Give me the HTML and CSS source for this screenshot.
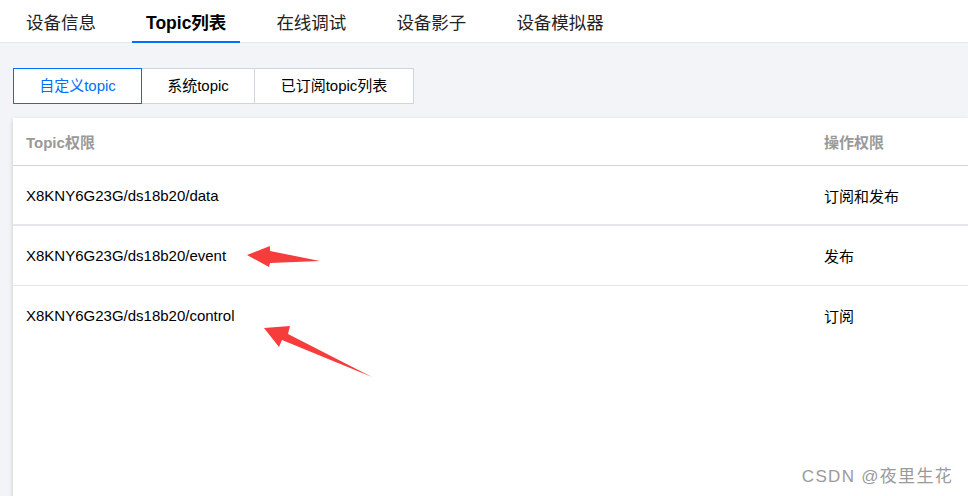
FILE: index.html
```html
<!DOCTYPE html>
<html lang="zh-CN">
<head>
    <meta charset="UTF-8">
    <meta name="viewport" content="width=device-width, initial-scale=1.0">
    <title>Topic列表</title>
    <link rel="stylesheet" href="styles.css">
</head>
<body>
    <div class="top-tabs">
        <div class="top-tab">设备信息</div>
        <div class="top-tab active">Topic列表</div>
        <div class="top-tab">在线调试</div>
        <div class="top-tab">设备影子</div>
        <div class="top-tab">设备模拟器</div>
    </div>

    <div class="main">
        <div class="sub-tabs">
            <div class="sub-tab active">自定义topic</div>
            <div class="sub-tab">系统topic</div>
            <div class="sub-tab wide">已订阅topic列表</div>
        </div>

        <div class="card">
            <div class="row head">
                <div class="col-topic">Topic权限</div>
                <div class="col-perm">操作权限</div>
            </div>
            <div class="row first">
                <div class="col-topic">X8KNY6G23G/ds18b20/data</div>
                <div class="col-perm">订阅和发布</div>
            </div>
            <div class="row">
                <div class="col-topic">X8KNY6G23G/ds18b20/event</div>
                <div class="col-perm">发布</div>
            </div>
            <div class="row last">
                <div class="col-topic">X8KNY6G23G/ds18b20/control</div>
                <div class="col-perm">订阅</div>
            </div>
        </div>
    </div>

    <!-- annotation arrows drawn over the screenshot -->
    <svg class="arrows" width="968" height="496" viewBox="0 0 968 496">
        <polygon points="247,255 270,246 270,251 320,261 270,263 269,267" fill="#f73c3c"/>
        <polygon points="264,328 290,326 288,334 372,377 282,340 279,347" fill="#f73c3c"/>
    </svg>

    <div class="watermark">CSDN @夜里生花</div>
</body>
</html>
```

FILE: styles.css
```css
body {
    margin: 0;
    width: 968px;
    height: 496px;
    overflow: hidden;
    background-color: #f3f4f7;
    font-family: "Liberation Sans", Arial, "Noto Sans CJK SC", sans-serif;
    color: #000;
    position: relative;
}
.top-tabs {
    display: flex;
    height: 42px;
    padding-left: 12px;
    background: white;
    border-bottom: 1px solid #e5e7ec;
}
.top-tab {
    padding: 2px 14px 0;
    margin-right: 22px;
    font-size: 17.5px;
    line-height: 42px;
    color: #222;
    box-sizing: border-box;
    height: 43px;
}
.top-tab.active {
    font-weight: bold;
    color: #000;
    border-bottom: 2px solid #006eff;
}
.main {
    padding: 25px 0 0 13px;
}
.sub-tabs {
    display: flex;
    height: 36px;
}
.sub-tab {
    width: 127px;
    border: 1px solid #cfd5de;
    border-left: none;
    background: white;
    font-size: 15px;
    line-height: 34px;
    text-align: center;
    color: #000;
}
.sub-tab:nth-child(2) {
    width: 112px;
}
.sub-tab.active {
    border: 1px solid #006eff;
    color: #006eff;
}
.sub-tab.wide {
    width: 158px;
}
.card {
    margin-top: 14px;
    background: white;
    height: 400px;
    box-shadow: 0 2px 4px rgba(54, 58, 80, 0.25);
}
.row {
    display: flex;
    align-items: center;
    height: 59px;
    border-bottom: 1px solid #e5e7ec;
    font-size: 15px;
}
.row.head {
    height: 47px;
    border-bottom-color: #d1d6de;
    color: #999;
    font-weight: bold;
}
.row.first {
    height: 58px;
    border-bottom-width: 2px;
}
.row.last {
    border-bottom: none;
}
.col-topic {
    width: 798px;
    padding-left: 13px;
}
.col-perm {
    flex: 1;
}
.arrows {
    position: absolute;
    left: 0;
    top: 0;
}
.watermark {
    position: absolute;
    right: 15px;
    bottom: 9px;
    font-size: 17px;
    letter-spacing: 1.3px;
    color: #9a9a9a;
    text-shadow: 0 0 1px #fff;
}
```
